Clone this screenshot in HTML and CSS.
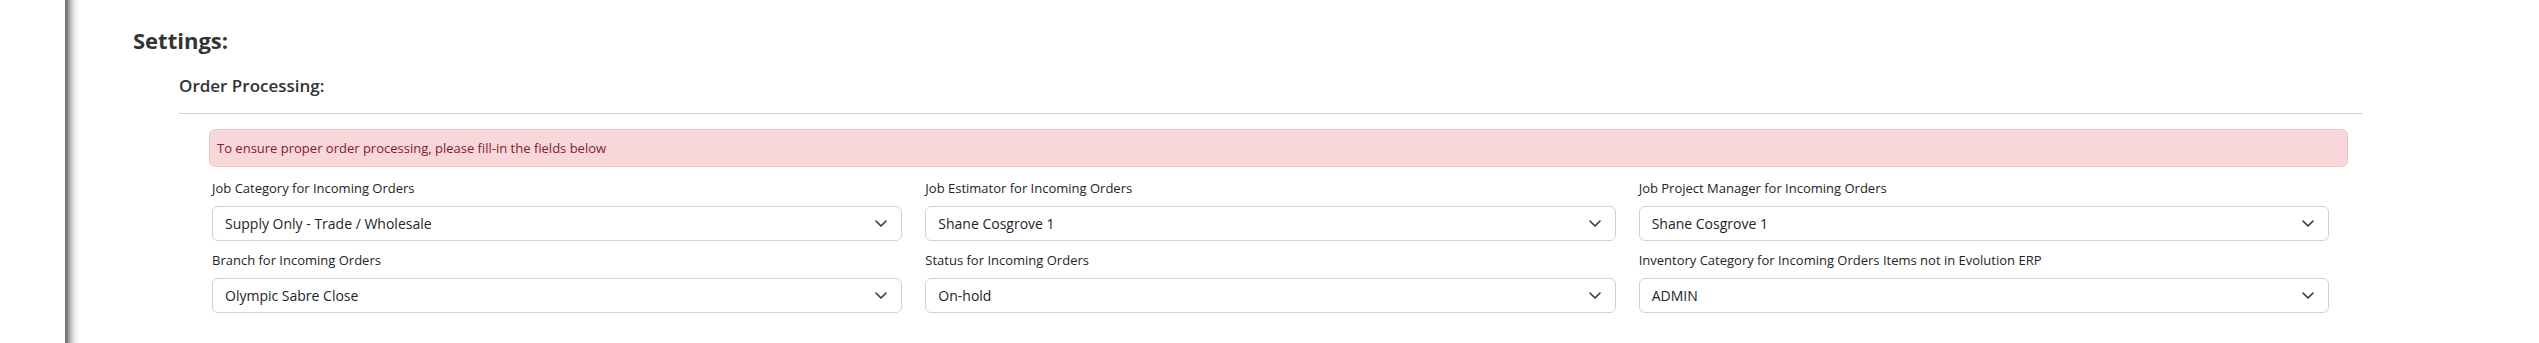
FILE: index.html
```html
<!DOCTYPE html>
<html lang="en">
<head>
<meta charset="utf-8">
<title>Settings</title>
<link rel="stylesheet" href="styles.css">
</head>
<body>
<div class="page">
  <div class="rail"></div>
  <div class="edge"></div>
  <main class="main">
    <h4 class="title">Settings:</h4>
    <section class="section">
      <h5 class="subtitle">Order Processing:</h5>
      <hr class="divider">
      <div class="alert">To ensure proper order processing, please fill-in the fields below</div>
      <div class="fields">
        <div class="field">
          <label class="label">Job Category for Incoming Orders</label>
          <div class="select"><span>Supply Only - Trade / Wholesale</span><svg class="chev" width="12" height="7" viewBox="0 0 12 7"><path d="M1 1l5 5 5-5" fill="none" stroke="#343a40" stroke-width="1.6" stroke-linecap="round" stroke-linejoin="round"/></svg></div>
        </div>
        <div class="field">
          <label class="label">Job Estimator for Incoming Orders</label>
          <div class="select"><span>Shane Cosgrove 1</span><svg class="chev" width="12" height="7" viewBox="0 0 12 7"><path d="M1 1l5 5 5-5" fill="none" stroke="#343a40" stroke-width="1.6" stroke-linecap="round" stroke-linejoin="round"/></svg></div>
        </div>
        <div class="field">
          <label class="label">Job Project Manager for Incoming Orders</label>
          <div class="select"><span>Shane Cosgrove 1</span><svg class="chev" width="12" height="7" viewBox="0 0 12 7"><path d="M1 1l5 5 5-5" fill="none" stroke="#343a40" stroke-width="1.6" stroke-linecap="round" stroke-linejoin="round"/></svg></div>
        </div>
        <div class="field">
          <label class="label">Branch for Incoming Orders</label>
          <div class="select"><span>Olympic Sabre Close</span><svg class="chev" width="12" height="7" viewBox="0 0 12 7"><path d="M1 1l5 5 5-5" fill="none" stroke="#343a40" stroke-width="1.6" stroke-linecap="round" stroke-linejoin="round"/></svg></div>
        </div>
        <div class="field">
          <label class="label">Status for Incoming Orders</label>
          <div class="select"><span>On-hold</span><svg class="chev" width="12" height="7" viewBox="0 0 12 7"><path d="M1 1l5 5 5-5" fill="none" stroke="#343a40" stroke-width="1.6" stroke-linecap="round" stroke-linejoin="round"/></svg></div>
        </div>
        <div class="field">
          <label class="label">Inventory Category for Incoming Orders Items not in Evolution ERP</label>
          <div class="select"><span>ADMIN</span><svg class="chev" width="12" height="7" viewBox="0 0 12 7"><path d="M1 1l5 5 5-5" fill="none" stroke="#343a40" stroke-width="1.6" stroke-linecap="round" stroke-linejoin="round"/></svg></div>
        </div>
      </div>
    </section>
  </main>
</div>
</body>
</html>
```

FILE: styles.css
```css
html, body {
  margin: 0;
  padding: 0;
  background: #fff;
}
body {
  font-family: "Open Sans", "Noto Sans", sans-serif;
  color: #212529;
}
.page {
  display: flex;
  height: 343px;
  overflow: hidden;
}
.rail {
  width: 65px;
  flex: none;
}
.edge {
  width: 14px;
  flex: none;
  background: linear-gradient(to right, #6f6f6f 0, #7c7c7c 2px, #b4b4b4 5px, #e6e6e6 9px, #fff 14px);
}
.main {
  flex: 1;
  padding-left: 54px;
}
.title {
  margin: 26px 0 0 0;
  font-size: 22px;
  line-height: 29px;
  font-weight: 700;
  color: #333;
}
.section {
  margin-left: 46px;
  margin-right: 176px;
}
.subtitle {
  margin: 19px 0 0 0;
  font-size: 17px;
  line-height: 24px;
  font-weight: 600;
  color: #333;
}
.divider {
  margin: 15px 0 0 0;
  border: 0;
  border-top: 1px solid #d2d2d2;
  height: 0;
}
.alert {
  margin: 15px 15px 0 30px;
  padding: 9px 7px;
  font-size: 13px;
  line-height: 18px;
  color: #842029;
  background: #f8d7da;
  border: 1px solid #f5c2c7;
  border-radius: 6px;
}
.fields {
  margin: 11px 34px 0 33px;
  display: grid;
  grid-template-columns: repeat(3, 1fr);
  column-gap: 23px;
  row-gap: 9px;
}
.field {
  display: flex;
  flex-direction: column;
}
.label {
  font-size: 13px;
  line-height: 20px;
  margin-bottom: 8px;
  color: #212529;
}
.select {
  height: 35px;
  box-sizing: border-box;
  border: 1px solid #ced4da;
  border-radius: 6px;
  padding: 0 14px 0 12px;
  display: flex;
  align-items: center;
  justify-content: space-between;
  font-size: 14px;
  color: #212529;
  background: #fff;
}
.chev {
  flex: none;
}
```
